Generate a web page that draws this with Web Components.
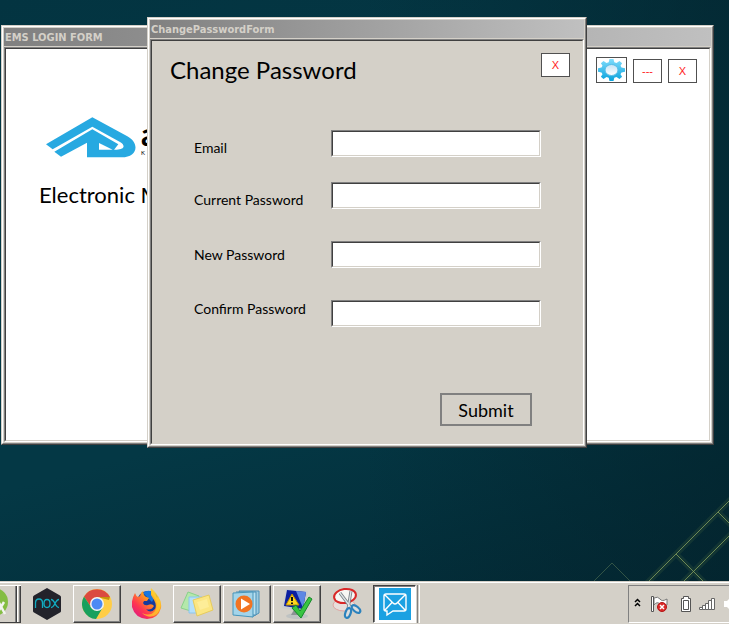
<!DOCTYPE html>
<html lang="en">
<head>
<meta charset="utf-8">
<title>Change Password</title>
<style>
  html, body { height: 100%; margin: 0; }
  body { font-family: Lato, "Noto Sans", sans-serif; color: #000; --face: #d4d0c8; }
</style>
</head>
<body>
<desktop-shell>
  <app-window slot="windows" class="login" caption="EMS LOGIN FORM"><login-screen></login-screen></app-window>
  <app-window slot="windows" class="dialog" caption="ChangePasswordForm"><password-form></password-form></app-window>
  <task-bar slot="taskbar"></task-bar>
</desktop-shell>

<script>
const define = (name, html) => {
  const template = document.createElement('template');
  template.innerHTML = html;
  customElements.define(name, class extends HTMLElement {
    constructor() {
      super();
      this.attachShadow({ mode: 'open' }).append(template.content.cloneNode(true));
    }
    connectedCallback() {
      const root = this.shadowRoot;
      root.querySelectorAll('[data-text]').forEach(el => {
        el.textContent = this.getAttribute(el.dataset.text) || '';
      });
      const input = root.querySelector('input');
      if (input) input.type = this.getAttribute('type') || 'text';
      const button = root.querySelector('button');
      if (button && this.hasAttribute('name')) button.setAttribute('aria-label', this.getAttribute('name'));
    }
  });
};

define('desktop-shell', `
<style>
  :host { display: flex; flex-direction: column; position: relative; min-height: 100vh; overflow: hidden;
    background: linear-gradient(165deg, #033441 0%, #043845 35%, #043845 60%, #03303c 80%, #042833 100%); }
  .space { flex: 1; position: relative; background: linear-gradient(90deg, transparent 50%, #03222b99 100%); }
  .lines { position: absolute; right: 0; bottom: 0; display: block; }
  ::slotted(.login) { position: absolute; top: 25px; left: 1px; right: 15px; }
  ::slotted(.dialog) { position: absolute; top: 17px; left: 147px; right: 142px; }
</style>
<div class="space">
  <svg class="lines" width="140" height="92" viewBox="589 489 140 92" fill="none" aria-hidden="true">
    <g stroke="#7f9a50" stroke-opacity=".13" stroke-width="6">
      <path d="M647 583 731 499M682 583 731 534M676 554 705 583M718 512 731 525"/>
    </g>
    <g stroke="#8ba45f" stroke-opacity=".75" stroke-width="1">
      <path d="M647 583 731 499M682 583 731 534M676 554 705 583M718 512 731 525"/>
    </g>
    <path d="M594 581 612 563 630 581" stroke="#62805a" stroke-opacity=".5"/>
  </svg>
  <slot name="windows"></slot>
</div>
<slot name="taskbar"></slot>`);

define('app-window', `
<style>
  :host { display: block; box-sizing: border-box; background: var(--face);
    border: 1px solid; border-color: #d4d0c8 #404040 #404040 #d4d0c8; }
  .frame { border: 1px solid; border-color: #fff #808080 #808080 #fff; padding: 1px; }
  header { height: 18px; line-height: 19px; padding: 0 1px; margin-bottom: 1px;
    background: linear-gradient(90deg, #808080, #c0c0c0); color: #d4d0c8;
    font-family: "DejaVu Sans Condensed", "DejaVu Sans", sans-serif; font-size: 11px; font-weight: bold;
    white-space: nowrap; overflow: hidden; }
  .edge { border: 1px solid; border-color: #808080 #fff #fff #808080; }
  .client { border: 1px solid; border-color: #404040 #d4d0c8 #d4d0c8 #404040; overflow: hidden; }
</style>
<div class="frame">
  <header data-text="caption"></header>
  <div class="edge"><div class="client"><slot></slot></div></div>
</div>`);

define('box-button', `
<style>
  :host { display: block; }
  button { display: block; box-sizing: border-box; width: 29px; height: 24px; padding: 0; background: #fff;
    border: 1px solid #505050; color: #f22; font: 11px/22px "Liberation Sans", sans-serif; }
</style>
<button type="button" data-text="text"></button>`);

define('gear-button', `
<style>
  :host { display: block; }
  button { display: block; box-sizing: border-box; width: 31px; height: 26px; padding: 0; background: #fff; border: 1px solid #505050; }
  svg { display: block; margin: auto; }
</style>
<button type="button" aria-label="Settings">
  <svg width="27" height="22" viewBox="0 0 27 22" aria-hidden="true">
    <defs>
      <linearGradient id="g" x2="0" y2="1"><stop stop-color="#7fdcfc"/><stop offset="1" stop-color="#08a2dc"/></linearGradient>
      <linearGradient id="h" x2="0" y2="1"><stop stop-color="#c3e4f6"/><stop offset="1" stop-color="#fff"/></linearGradient>
    </defs>
    <path fill="url(#g)" d="M11.500 0h4l.8 3.200 2.200.7L21.500 2l2.600 2.200-1.600 2.600 1 1.700 3.500.8v3.400l-3.500.8-1 1.700 1.600 2.600-2.600 2.200-3-1.900-2.200.7-.8 3.200h-4l-.8-3.200-2.200-.7-3 1.900-2.600-2.200 1.600-2.600-1-1.700L0 12.700V9.300l3.500-.8 1-1.700-1.600-2.600L5.500 2l3 1.900 2.200-.7z"/>
    <ellipse cx="13.500" cy="11" rx="6.500" ry="5.500" fill="url(#h)" stroke="#58bce6"/>
  </svg>
</button>`);

define('login-screen', `
<style>
  :host { display: block; box-sizing: border-box; min-height: 391px; background: #fff; padding: 8px 12px 0 33px; }
  .tools { display: flex; justify-content: flex-end; align-items: flex-end; gap: 6px; }
  .brand { display: flex; gap: 5px; margin-top: 34px; padding-left: 7px; }
  .brand svg { display: block; }
  .name { display: flex; flex-direction: column; gap: 2px; padding-top: 4px; }
  .name b { font-size: 32px; line-height: 26px; }
  .name small { font-size: 6px; line-height: 8px; }
  p { margin: 21px 0 0; font-size: 22px; line-height: 32px; }
</style>
<div class="tools">
  <gear-button></gear-button>
  <box-button text="---" name="Minimize"></box-button>
  <box-button text="X" name="Close login"></box-button>
</div>
<div class="brand">
  <svg width="90" height="41" viewBox="138 321 270 123" aria-hidden="true">
    <path fill="#27a9e1" d="M138 403 277 322 382 379C421 400 412 442 365 442H261V398L183 440 163 425 277 358 355 403 341 421 297 399V419H350C375 419 376 405 360 396L277 350 158 418Z"/>
  </svg>
  <div class="name"><b>a</b><small>K</small></div>
</div>
<p>Electronic M</p>`);

define('form-field', `
<style>
  :host { display: block; }
  .row { display: grid; grid-template-columns: 137px 1fr; align-items: center; }
  :host([label-at=end]) label { align-self: end; }
  :host([label-at=start]) label { align-self: start; }
  label { font-size: 14px; line-height: 18px; white-space: nowrap; }
  .well { border: 1px solid; border-color: #808080 #fff #fff #808080; }
  input { display: block; box-sizing: border-box; width: 100%; height: 25px; margin: 0; padding: 0 4px;
    border: 1px solid; border-color: #404040 #d4d0c8 #d4d0c8 #404040; border-radius: 0; background: #fff;
    font: 14px Lato, sans-serif; outline: none; }
</style>
<div class="row">
  <label for="field" data-text="label"></label>
  <div class="well"><input id="field"></div>
</div>`);

define('password-form', `
<style>
  :host { display: block; background: var(--face); }
  form { display: flow-root; min-height: 402px; box-sizing: border-box; padding: 12px 12px 17px 18px; }
  .top { display: flex; justify-content: space-between; align-items: flex-start; }
  h1 { margin: 0; font-size: 24px; line-height: 34px; font-weight: normal; }
  .fields { display: grid; gap: 32px; margin: 43px 29px 0 24px; }
  .pair { display: grid; gap: 25px; }
  .actions { display: flex; justify-content: flex-end; margin: 66px 38px 0 0; }
  .submit { box-sizing: border-box; min-width: 92px; height: 33px; border: 2px solid #808080; background: var(--face);
    color: #000; font: 18px/24px Lato, sans-serif; padding: 0 12px; }
</style>
<form onsubmit="return false">
  <div class="top"><h1>Change Password</h1><box-button text="X" name="Close"></box-button></div>
  <div class="fields">
    <div class="pair">
      <form-field label="Email" label-at="end"></form-field>
      <form-field label="Current Password" type="password" label-at="end"></form-field>
    </div>
    <form-field label="New Password" type="password"></form-field>
    <form-field label="Confirm Password" type="password" label-at="start"></form-field>
  </div>
  <div class="actions"><button class="submit" type="submit">Submit</button></div>
</form>`);

define('task-item', `
<style>
  :host { display: block; width: 48px; height: 38px; }
  button { display: flex; align-items: center; justify-content: center; box-sizing: border-box; width: 100%; height: 100%;
    padding: 0; border: 0; background: none; }
  :host([state=open]) button { border: 1px solid; border-color: #fff #404040 #404040 #fff; box-shadow: inset -1px -1px #808080; }
  :host([state=active]) { width: 43px; }
  :host([state=active]) button { border: 1px solid; border-color: #404040 #fff #fff #404040; background: #fff; box-shadow: inset 1px 1px #808080, 1px 0 var(--face), 2px 0 #808080, 3px 0 var(--face), 4px 0 #fff; }
  :host([state=stack]) { width: 21px; }
  :host([state=stack]) button { justify-content: flex-start; overflow: hidden; border-top: 1px solid #fff; border-bottom: 1px solid #404040;
    background: linear-gradient(90deg, transparent 15px, #808080 15px 16px, #404040 16px 17px, #fff 17px 18px, transparent 18px 19px, #808080 19px 20px, #404040 20px); }
</style>
<button type="button"><slot></slot></button>`);

define('task-bar', `
<style>
  :host { display: flex; flex: none; height: 43px; box-sizing: border-box; background: var(--face);
    border-top: 1px solid #d4d0c8; box-shadow: inset 0 1px #fff; padding-top: 3px; position: relative; }
  nav { display: flex; flex: 1; gap: 2px; min-width: 0; }
  svg { display: block; flex: none; }
  .tray { display: flex; align-items: center; box-sizing: border-box; width: 101px; height: 38px; padding-left: 5px; overflow: hidden;
    border: 1px solid; border-color: #808080 transparent #fff #808080; border-right: 0; }
</style>
<nav aria-label="Taskbar">
  <task-item state="stack" name="Android Studio">
    <svg width="10" height="34" viewBox="0 0 10 34"><circle cx="-6" cy="15" r="14" fill="#84bd43"/><path d="M-4 10 5 27M4 15-5 30" stroke="#f2f4f0" stroke-width="2.500"/></svg>
  </task-item>
  <task-item name="Nox">
    <svg width="30" height="34" viewBox="0 0 30 34"><path d="M15 1 28 8.500Q29 9 29 10V24Q29 25 28 25.500L15 33 2 25.500Q1 25 1 24V10Q1 9 2 8.500Z" fill="#23232b"/><path d="M3.500 21v-5q0-4 3.500-4t3.500 4v5M15 12.500q3 0 3 4t-3 4-3-4 3-4M19 12.500c4 0 4 8 8 8M27 12.500c-4 0-4 8-8 8" fill="none" stroke="#11acc1" stroke-width="1.300"/></svg>
  </task-item>
  <task-item state="open" name="Chrome">
    <svg width="30" height="30" viewBox="0 0 30 30"><circle cx="15" cy="15" r="15" fill="#ffcd46"/><path d="M2 7.500A15 15 0 0 1 28 8H15L9 18Z" fill="#db4a3f"/><path d="M2 7.500A15 15 0 0 0 14 30L21 18 15 21 9 18Z" fill="#18a05e"/><path d="M28 8H15L27 11Z" fill="#c6960a"/><circle cx="15" cy="15" r="7" fill="#f3f3f3"/><circle cx="15" cy="15" r="5.500" fill="#4b89f4"/></svg>
  </task-item>
  <task-item name="Firefox">
    <svg width="30" height="32" viewBox="0 0 30 32"><defs><linearGradient id="a" x1="1" x2=".1" y2="1"><stop stop-color="#fff044"/><stop offset=".4" stop-color="#ff9a1e"/><stop offset=".7" stop-color="#ff3750"/><stop offset="1" stop-color="#d9168c"/></linearGradient></defs><circle cx="16" cy="14" r="11" fill="#173a9c"/><path d="M11 5Q17 0 24 6L20 14Z" fill="#1877df"/><path d="M3 5Q4 8 6 9L8 8Q8 5 11 3L12 7Q13 9 17 10L15 13H12L11 15Q12 18 16 17Q20 15 22 18Q19 23 14 21Q18 26 23 21Q25 17 22 12L19 7L19 1Q24 5 25 10L26 8Q30 14 29 20Q26 31 15 31Q3 30 0 19Q-1 12 3 5Z" fill="url(#a)"/><path d="M19 0Q18 4 22 9Q27 15 23 23Q18 29 10 25Q18 32 25 26Q31 18 27 11Q26 6 19 0Z" fill="#ffce2c" opacity=".75"/></svg>
  </task-item>
  <task-item state="open" name="Sticky Notes">
    <svg width="34" height="28" viewBox="0 0 34 28"><path d="M8 2 19 6 14 22 1 18Z" fill="#b4e8ab" stroke="#8ad18a"/><path d="M9 7H22V23H9Z" fill="#b5e0fa" stroke="#8cc6ec"/><path d="M13 10 29 5 33 20 17 26Z" fill="#fbe682" stroke="#e6cb5e"/><path d="M17 12 27 9 29 17 20 20Z" fill="#fff3ae" opacity=".5"/></svg>
  </task-item>
  <task-item state="open" name="Media Player">
    <svg width="30" height="28" viewBox="0 0 30 28"><path d="M7 1H27V23L20 27Z" fill="#9ccbe0" stroke="#4c8fb5"/><path d="M4 2H24V25H4" fill="#b9e1f0" stroke="#4c8fb5"/><path d="M1 3 21 2V27L1 25Z" fill="#a3d4e9" stroke="#4896bb"/><circle cx="12" cy="14" r="8.500" fill="#f27422"/><path d="M9 8.500V19.500L18 14Z" fill="#fff"/></svg>
  </task-item>
  <task-item state="open" name="System Status">
    <svg width="32" height="32" viewBox="0 0 32 32"><ellipse cx="16" cy="28" rx="11" ry="3" fill="#bec2c2"/><path d="M14 20H20L22 27H10Z" fill="#8d9294"/><path d="M5 1 27 3 23 24 1 20Z" fill="#c9cccf"/><path d="M6 2 25 4 22 21 3 18Z" fill="#0c1fa0"/><path d="M15 3 25 4 22 20Z" fill="#5d87e4"/><path d="M11 6 18 17H5Z" fill="#ffd51f" stroke="#bd8c00"/><path d="M11 9V13M11 14.500V16" stroke="#111" stroke-width="2"/><path d="M11 20 15 17 19 23 28 9 31 11 20 30Z" fill="#38c441" stroke="#16892b"/></svg>
  </task-item>
  <task-item name="Snipping Tool">
    <svg width="30" height="34" viewBox="0 0 30 34"><ellipse cx="12" cy="18" rx="11" ry="6" fill="#e7dfdc" stroke="#e0a5a2"/><ellipse cx="13" cy="9" rx="11" ry="7" transform="rotate(-8 13 9)" fill="#f7f7f5" stroke="#d92828" stroke-width="2"/><path d="M8 6 20 22M19 4 16 22" stroke="#7b8288" stroke-width="3"/><path d="M8 6 20 22M19 4 16 22" stroke="#dfe3e6" stroke-width="1.300"/><ellipse cx="16" cy="26" rx="2.600" ry="5" transform="rotate(20 16 26)" fill="#ddd" stroke="#2c82bd" stroke-width="2.200"/><ellipse cx="24" cy="22" rx="2.600" ry="5" transform="rotate(-50 24 22)" fill="#ddd" stroke="#2c82bd" stroke-width="2.200"/></svg>
  </task-item>
  <task-item state="active" name="Messages">
    <svg width="32" height="32" viewBox="0 0 32 32"><path fill="#1ba1e2" d="M0 0H32V32H0Z"/><path d="M7 6H25Q27 6 27 8V21Q27 23 25 23H14L8 27V23H7Q5 23 5 21V8Q5 6 7 6ZM6 7 14 15Q16 17 18 15L26 7M6 22 13 14.500M26 22 19 14.500" fill="none" stroke="#fff" stroke-width="1.400"/></svg>
  </task-item>
</nav>
<div class="tray">
  <svg width="96" height="24" viewBox="634 592 96 24" role="img" aria-label="Notification area">
    <path d="M635 602 637.500 599.500 640 602M635 606 637.500 603.500 640 606" fill="none" stroke="#000" stroke-width="1.500"/>
    <path d="M654 598Q658 596 660 599T667 599V605Q663 607 660 604T654 605Z" fill="#fff" stroke="#777"/>
    <path d="M651.500 596.500H653.500V611.500H651.500Z" fill="#fff" stroke="#555"/>
    <circle cx="662" cy="607" r="4.500" fill="#dc2929" stroke="#b31616"/><path d="M660 605 664 609M664 605 660 609" stroke="#fff" stroke-width="1.500"/>
    <path d="M681.500 598.500H683.500V596.500H688.500V598.500H690.500V611.500H681.500Z" fill="#fff" stroke="#555"/><path d="M683.500 600.500H688.500V609.500H683.500Z" fill="#fff" stroke="#555"/>
    <path d="M699.500 607.500H702.500V609.500H699.500ZM702.500 605.500H705.500V609.500H702.500ZM705.500 603.500H708.500V609.500H705.500ZM708.500 600.500H711.500V609.500H708.500ZM711.500 598.500H714.500V609.500H711.500Z" fill="#fff" stroke="#666"/>
    <path d="M724 601H727L730 598V610L727 607H724Z" fill="#fff"/>
  </svg>
</div>`);
</script>
</body>
</html>
